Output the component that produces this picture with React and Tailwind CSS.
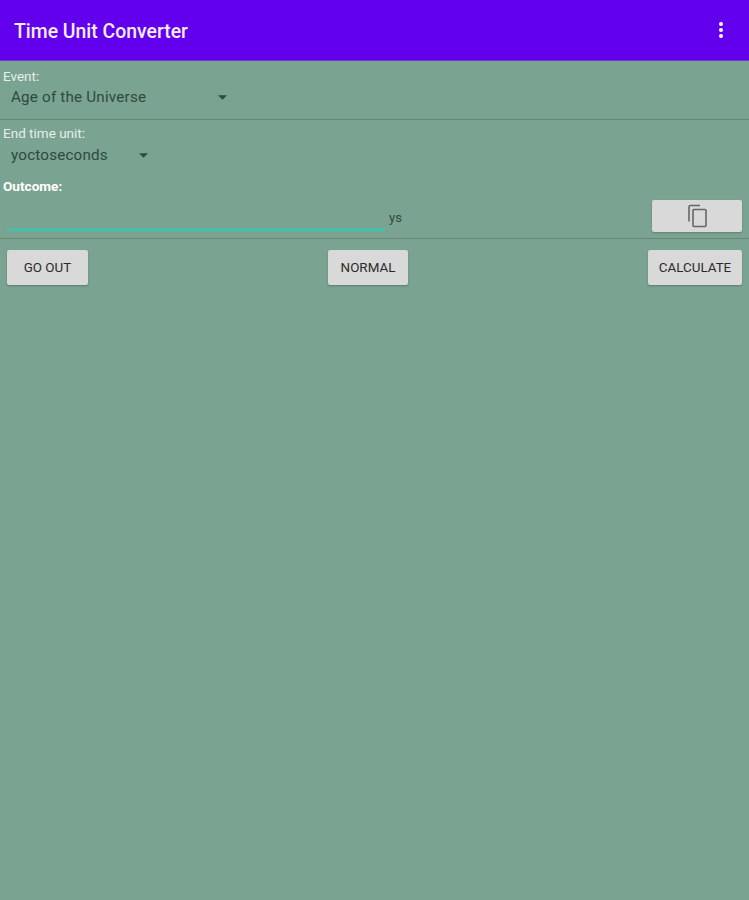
export default function App() {
  const btn = "flex items-center justify-center h-[35px] pt-[1px] rounded-[2px] bg-[#d9d9d9] shadow-[0_1px_2px_rgba(0,0,0,0.25)] text-[13.4px] text-[#2b2b2b]";
  const Caret = () => (
    <svg width="9" height="5" viewBox="0 0 10 5" className="block">
      <path d="M0 0h10L5 5z" fill="#2f4a40" />
    </svg>
  );
  return (
    <div className="w-[749px] h-[900px] flex flex-col bg-[#7ba391] font-['Roboto',sans-serif]">
      <header className="h-[61px] shrink-0 flex items-center justify-between pl-[14px] pr-[26px] pt-[3px] bg-[#6200ee] border-b border-[#6a3fd0]">
        <h1 className="text-[19.4px] font-medium text-[#f4eefe]">Time Unit Converter</h1>
        <div className="flex flex-col gap-[2px] -mt-[3px]">
          <span className="w-[4px] h-[4px] rounded-full bg-white" />
          <span className="w-[4px] h-[4px] rounded-full bg-white" />
          <span className="w-[4px] h-[4px] rounded-full bg-white" />
        </div>
      </header>
      <main className="flex flex-col">
        <div className="pl-[3px] pt-[8px] h-[59px] border-b border-[#65877a]">
          <div className="text-[13.5px] leading-[14px] text-[#e6f0eb]">Event:</div>
          <div className="flex items-center w-[224px] justify-between pl-[8px] mt-[5px]">
            <span className="text-[15.2px] leading-[18px] tracking-[0.2px] text-[#2c4a3f]">Age of the Universe</span>
            <Caret />
          </div>
        </div>
        <div className="pl-[3px] pt-[6px] h-[52px]">
          <div className="text-[13.5px] leading-[14px] text-[#e6f0eb]">End time unit:</div>
          <div className="flex items-center w-[145px] justify-between pl-[8px] mt-[6px]">
            <span className="text-[15.2px] leading-[18px] tracking-[0.2px] text-[#2c4a3f]">yoctoseconds</span>
            <Caret />
          </div>
        </div>
        <div className="pl-[3px] pt-[7px] h-[20px] text-[13.6px] leading-[14px] font-bold text-white">Outcome:</div>
        <div className="flex items-end justify-between h-[47px] pl-[7px] pr-[7px] pb-[6px] border-b border-[#65877a]">
          <div className="flex items-start h-[32px]">
            <div className="w-[378px] h-[31px] border-b-[3px] border-[#44bfa9]" />
            <span className="ml-[4px] mt-[11px] text-[13px] leading-[14px] text-[#2f4a40]">ys</span>
          </div>
          <button className="flex items-center justify-center w-[90px] h-[32px] rounded-[2px] bg-[#d9d9d9] shadow-[0_1px_2px_rgba(0,0,0,0.2)]">
            <svg width="22" height="24" viewBox="0 0 22 24" fill="none" stroke="#666" strokeWidth="1.6">
              <path d="M3 17.5V2.8C3 2 3.6 1.5 4.4 1.5H14" />
              <rect x="7" y="5.5" width="13" height="17" rx="1" />
            </svg>
          </button>
        </div>
        <div className="flex items-start justify-between pl-[7px] pr-[7px] pt-[11px]">
          <button className={btn + " w-[81px]"}>GO OUT</button>
          <button className={btn + " w-[80px]"}>NORMAL</button>
          <button className={btn + " w-[94px]"}>CALCULATE</button>
        </div>
      </main>
    </div>
  );
}
